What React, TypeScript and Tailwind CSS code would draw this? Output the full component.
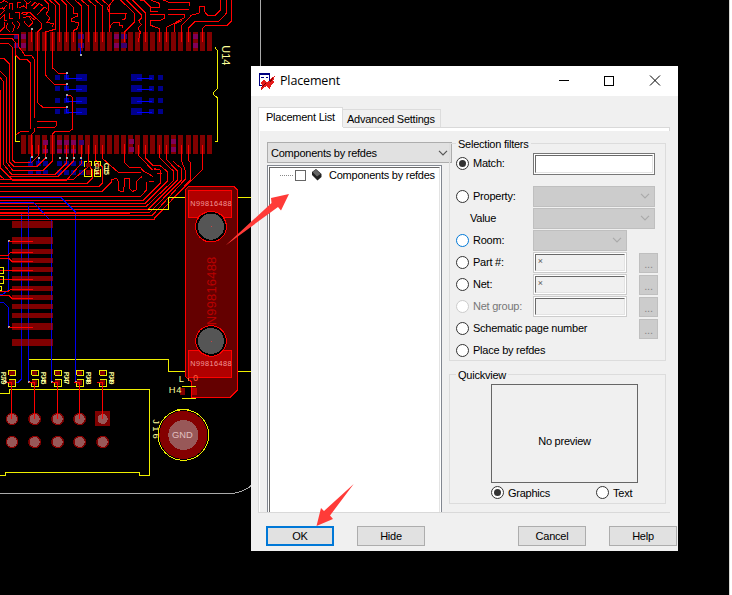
import React from "react";

const padColumns = Array.from({ length: 27 }, (_, i) => Math.round(63 + i * 21.46));
const connectorPads = [33, 81, 117, 144, 171, 198, 228, 255, 282, 309, 339, 387];
const tallPads = [33, 81, 339, 387];
const headers = [
  [36, "PJ79"],
  [104, "PJ45"],
  [173, "PJ47"],
  [239, "PJ48"],
  [308, "PJ49"],
] as const;

/* Board artwork is drawn in thirds of a pixel. */
function Board() {
  return (
    <svg className="absolute inset-0" width="732" height="595" viewBox="0 0 2196 1785" fill="none" shapeRendering="crispEdges" fontFamily="Liberation Sans, sans-serif">
      {/* blue bottom layer */}
      <g fill="#00008b">
        {[232, 265, 301, 334].map((y) => (
          <g key={y}>
            <rect x="165" y={y - 7} width="15" height="15" />
            <rect x="192" y={y - 7} width="16" height="15" />
            <rect x="228" y={y - 10} width="34" height="21" />
            <rect x="393" y={y - 10} width="33" height="21" />
            <rect x="447" y={y - 7} width="15" height="15" />
            <rect x="474" y={y - 7} width="15" height="15" />
            <path d={`M200 ${y - 12}V${y + 3}H246M411 ${y + 3}H456`} stroke="#0000ff" strokeWidth="3" fill="none" />
          </g>
        ))}
        {[84, 107, 129, 171, 192, 213, 237].map((x) => (
          <g key={x}>
            <rect x={x} y="483" width="15" height="15" />
            <rect x={x} y="510" width="15" height="15" />
          </g>
        ))}
      </g>
      <g fill="#800000">
        {padColumns.map((x) => (
          <g key={x}>
            <rect x={x} y="96" width="15" height="57" />
            <rect x={x} y="405" width="15" height="57" />
          </g>
        ))}
      </g>
      <g fill="#80005a">
        {[63, 342, 579].map((x) => (
          <path key={x} d={`M${x} 102h15v15h-15zM${x} 129h15v15h-15z`} />
        ))}
        {[129, 171, 192, 213].map((x) => (
          <path key={x} d={`M${x} 420h15v15h-15zM${x} 447h15v12h-15z`} />
        ))}
        <path d="M387 417h15v15h-15zM387 441h15v15h-15zM513 417h15v15h-15zM513 441h15v15h-15z" />
      </g>
      <path fill="#3a0070" d="M42 102h15v15H42zM42 129h15v15H42zM234 102h17v15h-17zM234 129h17v15h-17zM364 102h17v15h-17zM364 129h17v15h-17zM237 420h15v15h-15z" />

      {/* top copper */}
      <g stroke="#ff0000" strokeWidth="3">
        <path d="M0 9L12 2 24 8M0 25H12L21 15M0 44L14 32 6 20M28 27V12L38 9V30M52 24V8H64M80 5V25L70 18 56 24M28 40V56H40M44 38H58V56M0 57L12 46V60H22M0 95L12 82V66M24 68L18 84 30 95M36 68L44 78 38 95M52 64L60 72 52 88M62 40L77 45 84 38M70 54L88 48 105 60M72 65L86 80 99 68 88 52M65 38H90L124 70V84L113 95V308L130 323H200" />
        <path d="M72 0L84 12 94 2M94 18L105 7 115 15M100 28L118 10 128 18M112 44L132 22 142 26M134 0L146 12V30L138 42 150 54 140 68 160 70 157 82M148 0L165 15V88L136 96V225L163 253H200M157 96V203L175 220H200M164 0L179 15V125M185 0L199 15V125M199 0L220 22V40H233V48L214 56V65L236 67 233 85 220 92V125M225 0L244 17V145M244 0L265 18V125M265 0L286 18V125M286 0L307 18V125M307 0L328 18V96M340 0L322 24 330 41H378L376 56 367 60M361 0L404 40V65L374 96V125M328 96L331 78 341 67H359V75H367V85M379 0L425 46V54L416 62 424 74 414 85 421 96 415 125M398 0L436 38V125M431 0L452 22V35H475M420 0H433M452 0L478 10V22H450M450 43H494V54L480 62H450V75L478 86V125M490 0L509 8H567V18M504 27H568M504 43H552V54L500 82V125M522 96V73L546 62M597 40V20H613V34L623 46H646L662 30V0M679 0V40L655 65H585L565 85V125M695 0V62L681 76H618L607 86V125M597 40L575 45 544 78V125" />
        <path d="M94 88V125M0 103H55V138L75 166H95L104 180V355M0 115H36L46 128V165L60 179H82L92 190V387M0 130H26L37 142V480L45 488H95L116 466V435M0 175H12L28 192V485L42 500H110L136 475V435M0 213L19 232V486L38 511H130L157 484V402L165 395H207L218 387V292L211 286H200M0 232L10 244V492L34 522H166L199 490V435M0 270V503L26 530H174L220 484V435M96 435V470M46 405L62 395H87M112 364H170V374M112 382H164L171 374M94 470V405L103 395V385" />
        <path d="M0 500L37 540H200L244 490V435M0 527L15 540M0 538H220L265 500V435M0 550H262L277 535V510L265 495V435M0 559H298L307 549V501L286 480V435M0 573H308L334 547V540L350 534 355 545V570L361 574H371L374 536H388V566L398 574 409 570V545L425 530M307 435V475L355 517H422M374 431V488L388 502H421L430 513 460 530M462 507H470M471 519H486M447 543H462M480 530V546" />
        <path d="M0 589H422L438 572V547M0 600H430L480 550V510L462 505M0 609H436L502 543V515L478 495H457L436 473V435M0 618H440L520 542V513L478 472V435M0 627H445L532 540V513L499 478V435M0 636H450L544 540V505L520 485M0 647H456L556 537V513L544 480V435M0 657H462L571 540V488L565 480V435M607 435V509L462 654M415 435V465L457 510" />
      </g>

      {/* component outlines */}
      <path stroke="#eeee00" strokeWidth="3" d="M47 168V425H60M645 142L653 154V264L641 277V284L653 294V425H645M444 628H505V593H556M708 593H755M87 1079H505V1114H556M708 1114H755M0 1180H28V1168H449V1426H419V1417H16V1426H0" />
      <path stroke="#0000ee" strokeWidth="3" d="M0 607H100L150 660M0 592H182L227 637V1146H240M154 660V1146H170M64 640V1137L54 1147H36M85 617V1146M26 723V870L10 882H0M0 906H10L26 924V980M92 472V490M116 474V490M241 140V162M244 472V480" />
      <path stroke="#ff0000" strokeWidth="3" d="M0 639H390M0 647H390M0 659H464" />
      <g fill="#aaa">
        {[[96, 87], [243, 165], [201, 219], [201, 252], [201, 285], [201, 321], [96, 471], [117, 474], [138, 474], [180, 474], [201, 474], [222, 474], [243, 474], [27, 723], [27, 981], [17, 1146], [87, 1146], [156, 1146], [228, 1146]].map(([x, y]) => (
          <rect key={`${x}-${y}`} x={x - 3} y={y - 3} width="6" height="6" />
        ))}
      </g>
      <g fill="#800000">
        {connectorPads.map((y) => (
          <rect key={y} x="36" y={630 + y} width="123" height={tallPads.includes(y) ? 21 : 15} />
        ))}
      </g>
      <path stroke="#6c006c" strokeWidth="3" d="M64 663V684M64 711V732M64 747V762M64 774V789M64 801V816M64 828V843M64 858V873M64 885V900M64 912V927M64 939V954M64 969V990M64 1017V1038M85 663V684M85 711V732M85 747V762M85 774V789M85 801V816M85 828V843M85 858V873M85 885V900M85 912V927M85 939V954M85 969V990M85 1017V1038M154 663V684M154 711V732M154 747V762M154 774V789M154 801V816M154 828V843M154 858V873M154 885V900M154 912V927M154 939V954M154 969V990M154 1017V1038" />
      <path stroke="#ff0000" strokeWidth="3" d="M27 724H99M0 766H25L31 757H99M0 777L5 775H27L36 784H99M0 811H99M0 838H99M0 874H24L32 868H99M0 886H27L36 895H99M27 982H99" />
      <path stroke="#eeee00" strokeWidth="3" d="M0 802H11V820H0M0 829H11V851H0M0 859H5V870H0M262 484H254V500M266 484H275V498M283 498V484H301V498M254 508V529H274V508M283 508V529H301V508" />
      <path fill="#800000" d="M258 488h15v12h-15zM258 510h15v15h-15zM285 488h14v12h-14zM285 510h14v15h-14z" />
      <g fill="#ffff99" fontWeight="bold">
        <text transform="translate(312 488) rotate(90)" fontSize="21" textLength="37">C115</text>
        <text transform="translate(284 488) rotate(90)" fontSize="18" textLength="36">C114</text>
      </g>
      <text transform="translate(665 136) rotate(90)" fontSize="33" textLength="60" fill="#ffff99">U14</text>

      {/* mounting bracket */}
      <path fill="#640000" stroke="#ff0000" strokeWidth="3" d="M556 569L568 558H701L713 571V1169L691 1192H575V1146L556 1130Z" />
      <path fill="#b00000" stroke="#ff0000" strokeWidth="3" d="M565 571H695V652H565ZM565 1051H695V1132H565Z" />
      {[680, 1023].map((y) => (
        <g key={y}>
          <circle cx="633" cy={y} r="46" fill="#000" stroke="#ff0000" strokeWidth="3" />
          <circle cx="633" cy={y} r="39" fill="#555" />
          <rect x="632" y={y - 1} width="3" height="3" fill="#c44" />
        </g>
      ))}
      <path stroke="#ff0000" strokeWidth="3" d="M594 652Q633 617 674 652M596 1051Q633 1087 672 1051" />
      <g fill="#f09898" fontSize="22">
        <text x="571" y="619" textLength="124">N99816488</text>
        <text x="571" y="1099" textLength="124">N99816488</text>
      </g>
      <text transform="translate(648 976) rotate(-90)" fontSize="39" textLength="206" fill="#b80000">N99816488</text>
      <path fill="#800000" d="M540 1164h15v21h-15z" />
      <path fill="#b00000" d="M575 1164h16v21h-16z" />
      <path stroke="#eeee00" strokeWidth="3" d="M546 1159H588M546 1195H588M531 1228H567" />
      <g fill="#ffff99" fontSize="28">
        <text x="536" y="1145">L</text>
        <text x="506" y="1179" textLength="38">H4</text>
        <text x="580" y="1142" fontSize="26" fill="#ff6040">0</text>
      </g>
      <path stroke="#f08040" strokeWidth="3" d="M566 1133V1142" />

      {/* header pins */}
      {headers.map(([x, label], i) => (
        <g key={label}>
          <path fill="#800000" d={`M${x - 8} 1113h16v14h-16zM${x - 8} 1141h16v14h-16z`} />
          <path stroke="#eeee00" strokeWidth="3" d={`M${x - 10} 1124V1111H${x + 10}V1127H${x - 7}M${x - 10} 1146V1159H${x + 10}V1138H${x - 8}`} />
          <text transform={`translate(${i === 0 ? 3 : x + 20} 1115) rotate(90)`} fontSize="21" fontWeight="bold" textLength="38" fill="#ffff99">{label}</text>
          {i === 4 ? <rect x="285" y="1233" width="45" height="44" fill="#800000" /> : <circle cx={x} cy="1257" r="18" fill="#800000" stroke="#990000" strokeWidth="2" />}
          <circle cx={x} cy="1326" r="18" fill="#800000" stroke="#990000" strokeWidth="2" />
          <circle cx={x} cy="1257" r="15" fill="#985858" />
          <circle cx={x} cy="1326" r="15" fill="#985858" />
          <path stroke="#ff0000" strokeWidth="3" d={`M${x - 16} 1146H${x - 1}V1257`} />
        </g>
      ))}
      <text transform="translate(459 1258) rotate(90)" fontSize="28" textLength="58" fill="#ffff99">J16</text>
      <circle cx="550" cy="1305" r="76" stroke="#eeee00" strokeWidth="3" />
      <circle cx="550" cy="1305" r="72" fill="#840000" />
      <circle cx="550" cy="1305" r="45" fill="#985858" />
      <text x="516" y="1315" fontSize="28" textLength="62" fill="#e0c0c0">GND</text>
      <path stroke="#aaa" strokeWidth="3" d="M0 1480H702L725 1474 748 1462 765 1440M781 0V200" />
      <rect x="2187" y="0" width="9" height="1785" fill="#fff" />
      <rect x="2187" y="0" width="3" height="1785" fill="#d8d8d4" />
    </svg>
  );
}

function Radio({ checked = false, tone = "border-[#333]" }: { checked?: boolean; tone?: string }) {
  return (
    <span className={`flex h-[13px] w-[13px] shrink-0 items-center justify-center rounded-full border bg-white ${tone}`}>
      {checked && <span className="h-[7px] w-[7px] rounded-full bg-[#333]" />}
    </span>
  );
}

function Chevron({ tone = "#aaa" }: { tone?: string }) {
  return (
    <svg width="10" height="6" viewBox="0 0 10 6" fill="none" stroke={tone} strokeWidth="1.2">
      <path d="M1 .8L5 4.8 9 .8" />
    </svg>
  );
}

function Select({ width }: { width: string }) {
  return (
    <span className={`flex h-[21px] items-center justify-end border border-[#bfbfbf] bg-[#ccc] pr-[4px] ${width}`}>
      <Chevron />
    </span>
  );
}

function Input({ value }: { value: string }) {
  return (
    <span className="flex h-[21px] w-[94px] border border-[#ccc] bg-white p-px">
      <span className="flex-1 border border-b-[#e3e3e3] border-r-[#e3e3e3] border-l-[#696969] border-t-[#696969] bg-[#f0f0f0] pl-[2px] font-[Roboto] text-[9px] leading-[12px] text-[#666]">{value}</span>
    </span>
  );
}

function Row({ label, tone, muted, value, children, more }: { label: string; tone?: string; muted?: boolean; value?: boolean; children?: React.ReactNode; more?: boolean }) {
  return (
    <div className="flex h-[22px] items-center">
      {!value && <Radio tone={tone} />}
      <span className={`${value ? "ml-[14px] w-[63px]" : "ml-[4px] w-[60px]"} whitespace-nowrap ${muted ? "text-[#777]" : ""}`}>{label}</span>
      <span className="w-[106px] shrink-0">{children}</span>
      {more && <span className="mt-px flex h-[20px] w-[19px] items-center justify-center border border-[#bfbfbf] bg-[#ccc] pt-[3px] text-[#888]">...</span>}
    </div>
  );
}

function Group({ title, className, children }: { title: string; className: string; children: React.ReactNode }) {
  return (
    <section className={`border border-[#dcdcdc] ${className}`}>
      <h2 className="-mt-[7px] ml-[6px] h-[14px] w-fit bg-[#f0f0f0] px-[2px] leading-[14px]">{title}</h2>
      {children}
    </section>
  );
}

function Button({ children, className }: { children: string; className: string }) {
  return <button className={`h-[20px] w-[68px] bg-[#e1e1e1] leading-[14px] ${className}`}>{children}</button>;
}

function Dialog() {
  return (
    <main className="absolute left-[251px] top-[66px] flex h-[485px] w-[427px] flex-col bg-[#f0f0f0] text-[11px] leading-[14px] tracking-[-0.24px] text-black">
      <header className="flex h-[30px] shrink-0 items-center bg-white pl-[8px]">
        <svg width="17" height="17" viewBox="0 0 17 17" shapeRendering="crispEdges">
          <path d="M0.500 1h10v11h-10z" fill="#fff" stroke="#000080" />
          <path d="M0 0h11v2H0z" fill="#000080" />
          <path d="M2 4.500h3M7 4.500h2" stroke="#000080" />
          <path d="M1 10L5 7l2 2 4-1 1-3 4-2-2 5 2 1-4 3-1 5-3-4-3 1-3 3 1-5z" fill="#e51c1c" />
          <path d="M7 10L3 14M14 5L11 9" stroke="#700" />
        </svg>
        <h1 className="ml-[4px] mr-auto font-['Open_Sans'] text-[12.5px] tracking-[-0.15px]">Placement</h1>
        <svg className="mr-[17px]" width="104" height="14" viewBox="0 0 104 14" fill="none" stroke="#000" shapeRendering="crispEdges">
          <path d="M2 6.500H12M47.500 2.500H56.500V11.500H47.500Z" />
          <path d="M93 1.500L103 11.500M103 1.500L93 11.500" shapeRendering="geometricPrecision" />
        </svg>
      </header>
      <nav className="ml-[7px] mt-[11px] flex h-[20px] shrink-0 items-end">
        <span className="h-[20px] w-[85px] whitespace-nowrap border border-b-0 border-[#dcdcdc] bg-white pl-[7px] pt-[2px]">Placement List</span>
        <span className="h-[18px] w-[98px] whitespace-nowrap border border-b-0 border-l-0 border-[#dcdcdc] pl-[4px] pt-[2px]">Advanced Settings</span>
      </nav>
      <div className="ml-[7px] flex h-[386px] w-[412px] shrink-0 flex-col border-b border-l border-[#d9d9d9]">
        <div className="flex h-[4px] shrink-0">
          <span className="w-[84px] bg-white" />
          <span className="flex-1 border-r border-t border-[#d9d9d9] bg-white" />
        </div>
        <div className="flex min-h-0 flex-1 border-l border-white">
          <div className="ml-[7px] flex w-[182px] shrink-0 flex-col pt-[11px]">
            <div className="flex h-[21px] w-[185px] shrink-0 items-center justify-between border border-[#adadad] bg-[#e1e1e1] pl-[3px] pr-[3px]">
              <span>Components by refdes</span>
              <Chevron tone="#555" />
            </div>
            <div className="mt-[2px] flex w-[175px] flex-1 border border-b-0 border-[#828790] bg-white pl-px pr-px pt-px">
              <div className="min-w-0 flex-1 border border-b-0 border-l-[#696969] border-r-[#e3e3e3] border-t-[#696969]">
                <div className="flex h-[14px] items-center pl-[10px]">
                  <span className="w-[13px] shrink-0 border-t border-dotted border-[#888]" />
                  <span className="ml-[2px] h-[11px] w-[11px] shrink-0 border border-[#666]" />
                  <svg className="ml-[5px] shrink-0" width="11" height="12" viewBox="0 0 11 12">
                    <path d="M5 0L10.500 5V8L6.500 11.500 1 6V3Z" fill="#222" />
                    <path d="M5 .5L9.500 5 6 7.500 1.500 3Z" fill="#666" />
                  </svg>
                  <span className="ml-[7px] whitespace-nowrap">Components by refdes</span>
                </div>
              </div>
            </div>
          </div>
          <div className="pt-[12px]">
            <Group title="Selection filters" className="h-[218px] w-[217px]">
              <div className="ml-[6px] mt-px flex h-[22px] items-center">
                <Radio checked />
                <span className="ml-[4px] w-[60px]">Match:</span>
                <span className="mt-[2px] flex h-[22px] w-[122px] shrink-0 border border-[#777] bg-white p-px">
                  <span className="flex-1 border border-b-[#e3e3e3] border-l-[#696969] border-r-[#e3e3e3] border-t-[#696969]" />
                </span>
              </div>
              <div className="ml-[6px] mt-[11px]">
                <Row label="Property:"><Select width="w-[122px]" /></Row>
                <Row label="Value" value><Select width="w-[122px]" /></Row>
                <Row label="Room:" tone="border-[#0078d7]"><Select width="w-[94px]" /></Row>
                <Row label="Part #:" more><Input value="×" /></Row>
                <Row label="Net:" more><Input value="×" /></Row>
                <Row label="Net group:" tone="border-[#ccc]" muted more><Input value="" /></Row>
                <Row label="Schematic page number" more />
                <Row label="Place by refdes" />
              </div>
            </Group>
            <Group title="Quickview" className="mt-[13px] h-[130px] w-[217px]">
              <div className="ml-[41px] mt-[2px] flex h-[99px] w-[147px] items-center justify-center border border-[#666] pt-[14px]">No preview</div>
              <div className="ml-[41px] mt-[3px] flex h-[13px] items-center">
                <Radio checked />
                <span className="ml-[4px] w-[88px]">Graphics</span>
                <Radio />
                <span className="ml-[4px]">Text</span>
              </div>
            </Group>
          </div>
        </div>
      </div>
      <footer className="ml-[15px] mt-[13px] flex">
        <Button className="border-2 border-[#0078d7]">OK</Button>
        <Button className="ml-[23px] border border-[#adadad]">Hide</Button>
        <Button className="ml-[93px] border border-[#adadad]">Cancel</Button>
        <Button className="ml-[23px] border border-[#adadad]">Help</Button>
      </footer>
    </main>
  );
}

export default function App() {
  return (
    <div className="relative h-[595px] w-[732px] overflow-hidden bg-black font-['Liberation_Sans',sans-serif]">
      <Board />
      <Dialog />
      <svg className="absolute inset-0" width="732" height="595" fill="#ff3b38">
        <path d="M225.500 245.500L271.500 203 271 198 289 194 281 210.500 278 207Z" />
        <path d="M353.700 484L330 515.500 333 519 316.500 526 321 508 324 511Z" />
      </svg>
    </div>
  );
}
